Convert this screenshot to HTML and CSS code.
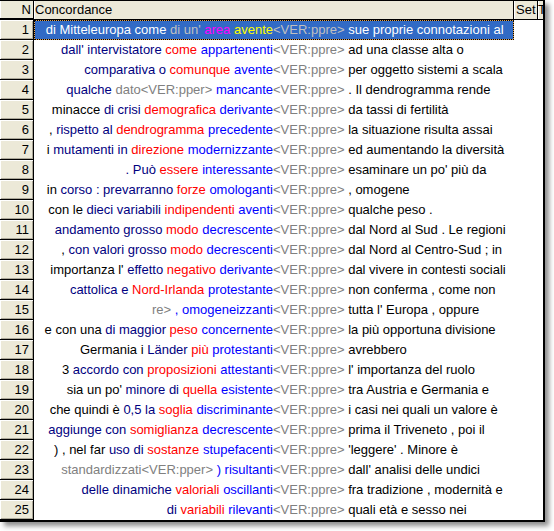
FILE: index.html
```html
<!DOCTYPE html>
<html>
<head>
<meta charset="utf-8">
<link rel="stylesheet" href="styles.css">
</head>
<body>
<div class="win">
  <div class="row head">
    <div class="c-n">N</div>
    <div class="c-conc">Concordance</div>
    <div class="c-set">Set</div>
    <div class="c-t">T</div>
  </div>

  <div class="row sel">
    <div class="c-n">1</div>
    <div class="c-conc"><span class="l">di Mitteleuropa come <span class="lg">di un'</span> <span class="mg">area</span> <span class="yl">avente</span></span><span class="r"><span class="lg">&lt;VER:ppre&gt;</span> sue proprie connotazioni al</span></div>
    <div class="c-set"></div><div class="c-t"></div>
  </div>
  <div class="row">
    <div class="c-n">2</div>
    <div class="c-conc"><span class="l"><span class="nv">dall' intervistatore</span> <span class="rd">come</span> <span class="bl">appartenenti</span></span><span class="r"><span class="gy">&lt;VER:ppre&gt;</span> ad una classe alta o</span></div>
    <div class="c-set"></div><div class="c-t"></div>
  </div>
  <div class="row">
    <div class="c-n">3</div>
    <div class="c-conc"><span class="l"><span class="nv">comparativa o</span> <span class="rd">comunque</span> <span class="bl">avente</span></span><span class="r"><span class="gy">&lt;VER:ppre&gt;</span> per oggetto sistemi a scala</span></div>
    <div class="c-set"></div><div class="c-t"></div>
  </div>
  <div class="row">
    <div class="c-n">4</div>
    <div class="c-conc"><span class="l"><span class="nv">qualche</span> <span class="gy">dato&lt;VER:pper&gt;</span> <span class="bl">mancante</span></span><span class="r"><span class="gy">&lt;VER:ppre&gt;</span> . Il dendrogramma rende</span></div>
    <div class="c-set"></div><div class="c-t"></div>
  </div>
  <div class="row">
    <div class="c-n">5</div>
    <div class="c-conc"><span class="l">minacce <span class="nv">di crisi</span> <span class="rd">demografica</span> <span class="bl">derivante</span></span><span class="r"><span class="gy">&lt;VER:ppre&gt;</span> da tassi di fertilità</span></div>
    <div class="c-set"></div><div class="c-t"></div>
  </div>
  <div class="row">
    <div class="c-n">6</div>
    <div class="c-conc"><span class="l">, <span class="nv">rispetto al</span> <span class="rd">dendrogramma</span> <span class="bl">precedente</span></span><span class="r"><span class="gy">&lt;VER:ppre&gt;</span> la situazione risulta assai</span></div>
    <div class="c-set"></div><div class="c-t"></div>
  </div>
  <div class="row">
    <div class="c-n">7</div>
    <div class="c-conc"><span class="l">i <span class="nv">mutamenti in</span> <span class="rd">direzione</span> <span class="bl">modernizzante</span></span><span class="r"><span class="gy">&lt;VER:ppre&gt;</span> ed aumentando la diversità</span></div>
    <div class="c-set"></div><div class="c-t"></div>
  </div>
  <div class="row">
    <div class="c-n">8</div>
    <div class="c-conc"><span class="l"><span class="nv">. Può</span> <span class="rd">essere</span> <span class="bl">interessante</span></span><span class="r"><span class="gy">&lt;VER:ppre&gt;</span> esaminare un po' più da</span></div>
    <div class="c-set"></div><div class="c-t"></div>
  </div>
  <div class="row">
    <div class="c-n">9</div>
    <div class="c-conc"><span class="l">in <span class="nv">corso : prevarranno</span> <span class="rd">forze</span> <span class="bl">omologanti</span></span><span class="r"><span class="gy">&lt;VER:ppre&gt;</span> , omogene</span></div>
    <div class="c-set"></div><div class="c-t"></div>
  </div>
  <div class="row">
    <div class="c-n">10</div>
    <div class="c-conc"><span class="l">con le <span class="nv">dieci variabili</span> <span class="rd">indipendenti</span> <span class="bl">aventi</span></span><span class="r"><span class="gy">&lt;VER:ppre&gt;</span> qualche peso .</span></div>
    <div class="c-set"></div><div class="c-t"></div>
  </div>
  <div class="row">
    <div class="c-n">11</div>
    <div class="c-conc"><span class="l"><span class="nv">andamento grosso</span> <span class="rd">modo</span> <span class="bl">decrescente</span></span><span class="r"><span class="gy">&lt;VER:ppre&gt;</span> dal Nord al Sud . Le regioni</span></div>
    <div class="c-set"></div><div class="c-t"></div>
  </div>
  <div class="row">
    <div class="c-n">12</div>
    <div class="c-conc"><span class="l">, <span class="nv">con valori grosso</span> <span class="rd">modo</span> <span class="bl">decrescenti</span></span><span class="r"><span class="gy">&lt;VER:ppre&gt;</span> dal Nord al Centro-Sud ; in</span></div>
    <div class="c-set"></div><div class="c-t"></div>
  </div>
  <div class="row">
    <div class="c-n">13</div>
    <div class="c-conc"><span class="l">importanza l' <span class="nv">effetto</span> <span class="rd">negativo</span> <span class="bl">derivante</span></span><span class="r"><span class="gy">&lt;VER:ppre&gt;</span> dal vivere in contesti sociali</span></div>
    <div class="c-set"></div><div class="c-t"></div>
  </div>
  <div class="row">
    <div class="c-n">14</div>
    <div class="c-conc"><span class="l"><span class="nv">cattolica e</span> <span class="rd">Nord-Irlanda</span> <span class="bl">protestante</span></span><span class="r"><span class="gy">&lt;VER:ppre&gt;</span> non conferma , come non</span></div>
    <div class="c-set"></div><div class="c-t"></div>
  </div>
  <div class="row">
    <div class="c-n">15</div>
    <div class="c-conc"><span class="l"><span class="gy">re&gt;</span> <span class="bl">, omogeneizzanti</span></span><span class="r"><span class="gy">&lt;VER:ppre&gt;</span> tutta l' Europa , oppure</span></div>
    <div class="c-set"></div><div class="c-t"></div>
  </div>
  <div class="row">
    <div class="c-n">16</div>
    <div class="c-conc"><span class="l">e con una <span class="nv">di maggior</span> <span class="rd">peso</span> <span class="bl">concernente</span></span><span class="r"><span class="gy">&lt;VER:ppre&gt;</span> la più opportuna divisione</span></div>
    <div class="c-set"></div><div class="c-t"></div>
  </div>
  <div class="row">
    <div class="c-n">17</div>
    <div class="c-conc"><span class="l">Germania i <span class="nv">Länder</span> <span class="rd">più</span> <span class="bl">protestanti</span></span><span class="r"><span class="gy">&lt;VER:ppre&gt;</span> avrebbero</span></div>
    <div class="c-set"></div><div class="c-t"></div>
  </div>
  <div class="row">
    <div class="c-n">18</div>
    <div class="c-conc"><span class="l">3 <span class="nv">accordo con</span> <span class="rd">proposizioni</span> <span class="bl">attestanti</span></span><span class="r"><span class="gy">&lt;VER:ppre&gt;</span> l' importanza del ruolo</span></div>
    <div class="c-set"></div><div class="c-t"></div>
  </div>
  <div class="row">
    <div class="c-n">19</div>
    <div class="c-conc"><span class="l">sia un po' <span class="nv">minore di</span> <span class="rd">quella</span> <span class="bl">esistente</span></span><span class="r"><span class="gy">&lt;VER:ppre&gt;</span> tra Austria e Germania e</span></div>
    <div class="c-set"></div><div class="c-t"></div>
  </div>
  <div class="row">
    <div class="c-n">20</div>
    <div class="c-conc"><span class="l">che quindi è <span class="nv">0,5 la</span> <span class="rd">soglia</span> <span class="bl">discriminante</span></span><span class="r"><span class="gy">&lt;VER:ppre&gt;</span> i casi nei quali un valore è</span></div>
    <div class="c-set"></div><div class="c-t"></div>
  </div>
  <div class="row">
    <div class="c-n">21</div>
    <div class="c-conc"><span class="l"><span class="nv">aggiunge con</span> <span class="rd">somiglianza</span> <span class="bl">decrescente</span></span><span class="r"><span class="gy">&lt;VER:ppre&gt;</span> prima il Triveneto , poi il</span></div>
    <div class="c-set"></div><div class="c-t"></div>
  </div>
  <div class="row">
    <div class="c-n">22</div>
    <div class="c-conc"><span class="l">) , nel far <span class="nv">uso di</span> <span class="rd">sostanze</span> <span class="bl">stupefacenti</span></span><span class="r"><span class="gy">&lt;VER:ppre&gt;</span> 'leggere' . Minore è</span></div>
    <div class="c-set"></div><div class="c-t"></div>
  </div>
  <div class="row">
    <div class="c-n">23</div>
    <div class="c-conc"><span class="l"><span class="gy">standardizzati&lt;VER:pper&gt;</span> <span class="bl">) risultanti</span></span><span class="r"><span class="gy">&lt;VER:ppre&gt;</span> dall' analisi delle undici</span></div>
    <div class="c-set"></div><div class="c-t"></div>
  </div>
  <div class="row">
    <div class="c-n">24</div>
    <div class="c-conc"><span class="l"><span class="nv">delle dinamiche</span> <span class="rd">valoriali</span> <span class="bl">oscillanti</span></span><span class="r"><span class="gy">&lt;VER:ppre&gt;</span> fra tradizione , modernità e</span></div>
    <div class="c-set"></div><div class="c-t"></div>
  </div>
  <div class="row">
    <div class="c-n">25</div>
    <div class="c-conc"><span class="l"><span class="nv">di</span> <span class="rd">variabili</span> <span class="bl">rilevanti</span></span><span class="r"><span class="gy">&lt;VER:ppre&gt;</span> quali età e sesso nei</span></div>
    <div class="c-set"></div><div class="c-t"></div>
  </div>
</div>
</body>
</html>
```
FILE: styles.css
```css
html, body {
  margin: 0;
  padding: 0;
  background: #fff;
}
body {
  width: 554px;
  height: 531px;
  overflow: hidden;
  font-family: "Liberation Sans", Arial, sans-serif;
  font-size: 13px;
  color: #000;
}
.win {
  width: 545px;
  border-top: 1px solid #000;
  border-bottom: 2px solid #000;
  background: #fff;
  box-shadow: 4px 4px 5px rgba(0, 0, 0, 0.45);
}
.row {
  display: grid;
  grid-template-columns: 34px 480px 24px 7px;
  height: 20px;
  line-height: 20px;
}
.row > div {
  white-space: nowrap;
  overflow: hidden;
}
.head {
  height: 19px;
  line-height: 18px;
  background: #ece9d8;
  border-bottom: 1px solid #000;
  height: 18px;
  box-sizing: content-box;
}
.head > div {
  border-right: 1px solid #000;
  box-shadow: inset 1px 0 #fff;
}
.head .c-n {
  text-align: right;
  padding-right: 2px;
}
.head .c-conc {
  padding-left: 1px;
}
.head .c-set {
  padding-left: 2px;
}
.head .c-t {
  border-right: 2px solid #000;
}
.c-n {
  background: #ece9d8;
  text-align: right;
  padding-right: 4px;
  border-right: 1px solid #000;
  border-bottom: 1px solid #000;
  box-shadow: inset 1px 1px #fff, inset -1px -1px #aca899;
}
.row:not(.head) .c-n {
  line-height: 19px;
}
.c-conc {
  display: flex;
}
.l {
  width: 239px;
  flex: none;
  text-align: right;
}
.r {
  flex: none;
}
.row:not(.head) .c-t {
  border-right: 2px solid #000;
  background: linear-gradient(#fff 0 2px, transparent 2px) no-repeat;
}
.sel .c-conc {
  color: #fff;
  border: 1px dotted #000;
  background: linear-gradient(#316ac5, #316ac5) padding-box, #e0a050;
  line-height: 18px;
}
.sel .l {
  width: 238px;
}
.nv { color: #000080; }
.rd { color: #ff0000; }
.bl { color: #0000ff; }
.gy { color: #808080; }
.lg { color: #c0c0c0; }
.mg { color: #ff00ff; }
.yl { color: #ffff00; }
```
